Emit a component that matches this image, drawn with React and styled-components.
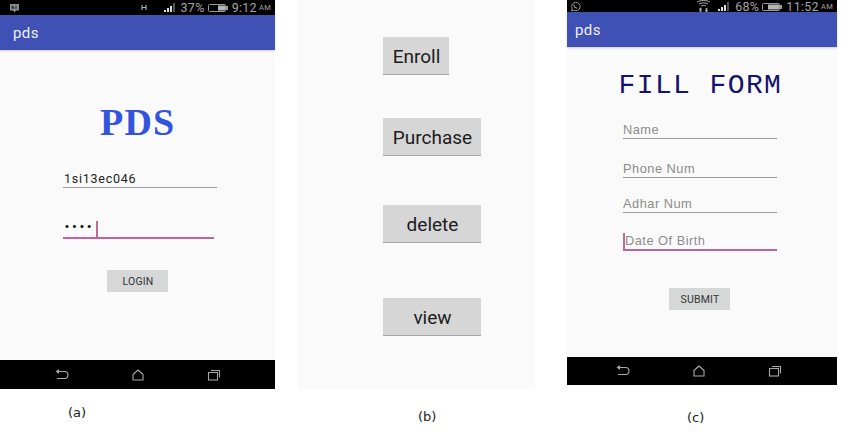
import React from "react";
import styled, { createGlobalStyle } from "styled-components";

const Global = createGlobalStyle`
  html, body { margin: 0; padding: 0; background: #fff; }
  body { font-family: "Roboto", "Liberation Sans", sans-serif; }
`;
const Page = styled.div`
  width: 850px; height: 432px; overflow: hidden; display: flex; align-items: flex-start; background: #fff;
`;
const Figure = styled.div`
  width: ${p => p.$w}px; margin-right: ${p => p.$mr || 0}px; flex: none;
`;
const Caption = styled.div`
  font-family: "DejaVu Sans", sans-serif; font-size: 13px; line-height: 16px; color: #222;
  margin-top: ${p => p.$top}px; margin-left: ${p => p.$left}px;
`;
const Phone = styled.div`
  height: ${p => p.$h}px; display: flex; flex-direction: column; background: #fafafa;
`;
const StatusBar = styled.div`
  height: ${p => p.$h}px; flex: none; background: #000; color: #a4a4a4; display: flex; align-items: center;
  padding: 0 4px 0 ${p => p.$pl}px; font-size: 12.5px; letter-spacing: .3px; font-family: "Roboto", sans-serif;
`;
const Spacer = styled.div` flex: 1; `;
const Small = styled.span` font-size: 7.5px; margin-left: 2px; `;
const Pct = styled.span` margin: 0 3px 0 4px; `;
const Clock = styled.span` margin-left: 4px; `;
const Gap = styled.span` width: ${p => p.$w}px; flex: none; `;
const AppBar = styled.div`
  height: 35px; flex: none; background: #3f51b5; color: #eef0f8; display: flex; align-items: center;
  padding-left: ${p => p.$pl}px; font-size: 15px; letter-spacing: .4px;
  box-shadow: 0 1px 2px rgba(0,0,0,.18);
`;
const Content = styled.div`
  flex: 1; display: flex; flex-direction: column; padding-top: ${p => p.$pt}px; padding-left: ${p => p.$pl}px;
`;
const NavBar = styled.div`
  height: ${p => p.$h}px; flex: none; background: #000; display: flex; align-items: center; justify-content: center;
  gap: 62px; padding-right: ${p => p.$pr || 0}px; color: #a8a8a8;
`;
const BrandTitle = styled.div`
  font-family: "Liberation Serif", serif; font-weight: 700; font-size: 38px; line-height: 40px; color: #3355dd;
  letter-spacing: 1.2px; margin-left: 37px;
`;
const FormTitle = styled.div`
  font-family: "Liberation Mono", monospace; font-size: 28px; line-height: 32px; color: #14146e; letter-spacing: 1.4px;
  margin-left: -4.500px;
`;
const Field = styled.div`
  width: ${p => p.$w}px; height: ${p => p.$h}px; margin-top: ${p => p.$mt}px; box-sizing: border-box;
  border-bottom: ${p => p.$active ? "2px solid #bd6498" : "1px solid #9a9a9a"};
  display: flex; align-items: flex-end; padding: 0 0 1px ${p => p.$pl || 0}px;
  font-family: "Liberation Sans", sans-serif; font-size: 12.8px; line-height: 14px;
`;
const Value = styled.span` color: #222; letter-spacing: .75px; font-family: "Roboto", sans-serif; font-size: 12.5px; `;
const Hint = styled.span` color: #8c8c8c; letter-spacing: .5px; `;
const Dots = styled.span`
  color: #000; font-size: 11px; letter-spacing: 3.600px; line-height: 14px; margin: 0 1px 3px 1px;
  font-family: "Liberation Sans", sans-serif;
`;
const Caret = styled.span`
  display: inline-block; width: 2px; height: 16px; margin-bottom: -1px; background: #c06a9c; flex: none;
`;
const SmallButton = styled.div`
  width: 61px; height: 22px; margin-top: ${p => p.$mt}px; margin-left: ${p => p.$ml}px;
  background: #d6d7d7; color: #333; display: flex; align-items: center; justify-content: center;
  font-family: "Roboto", sans-serif; font-size: 10.500px; letter-spacing: .2px; padding-left: 1px; box-sizing: border-box;
`;
const Menu = styled.div`
  height: 389px; background: #fafafa; display: flex; flex-direction: column; align-items: flex-start; padding-left: 85px;
  box-sizing: border-box;
`;
const BigButton = styled.div`
  width: ${p => p.$w}px; height: 38px; margin-top: ${p => p.$mt}px; box-sizing: border-box;
  background: #d6d6d6; border-bottom: 1.500px solid #a5a5a5; color: #1c1c1c; padding: 2px 0 0 1px;
  display: flex; align-items: center; justify-content: center;
  font-family: "Roboto", sans-serif; font-size: 19px;
`;

const Signal = () => (
  <svg width="13" height="9" viewBox="0 0 13 9" fill="currentColor">
    <rect x="0" y="7" width="2" height="2" fill="#ddd"/><rect x="3" y="5" width="2" height="4" fill="#ddd"/>
    <rect x="6" y="3" width="2" height="6" fill="#ddd"/><rect x="9" y="0" width="2" height="9" opacity=".5"/>
  </svg>
);
const Battery = ({ level }) => (
  <svg width="20" height="9" viewBox="0 0 20 9">
    <rect x=".5" y="1.500" width="17" height="7" rx="1" fill="none" stroke="#9a9a9a"/>
    <rect x="18" y="3" width="2" height="4" fill="#9a9a9a"/>
    <rect x={17 - level} y="2.500" width={level} height="5" fill="#b5b5b5"/>
  </svg>
);
const Chat = () => (
  <svg width="11" height="10" viewBox="0 0 11 10">
    <path d="M1 1h9v6.500H7L5.500 9.500 4 7.500H1z" fill="#8b8b8b"/>
    <path d="M3.200 2.500v3.400M3.200 4h1.600v1.900M7 2.500v3.400" stroke="#111" strokeWidth=".8" fill="none"/>
  </svg>
);
const WhatsApp = () => (
  <svg width="11" height="11" viewBox="0 0 11 11" fill="none" stroke="#9a9a9a">
    <path d="M1.500 9.800l.7-2.300A4.200 4.200 0 1 1 3.700 9.100z"/>
    <path d="M3.900 3.600c0 1.800 1.600 3.500 3.400 3.700" strokeWidth="1.100"/>
  </svg>
);
const Hplus = () => (
  <svg width="7" height="7" viewBox="0 0 7 7" stroke="#b5b5b5" strokeWidth="1.100" fill="none">
    <path d="M1 1v5M5 1v5M1 3.500h4"/>
  </svg>
);
const WifiTransfer = () => (
  <svg width="15" height="12" viewBox="0 0 15 12" fill="none" stroke="#b0b0b0" strokeWidth="1">
    <path d="M1 2c3.500-2 9.500-2 13 0M3 4c2.500-1.500 6.500-1.500 9 0M5 6c1.500-.8 3.500-.8 5 0"/>
    <path d="M4.500 8v4M10.500 8v4" strokeWidth="1.600"/><path d="M3 9.500l1.500-2 1.500 2M9 10l1.500 2 1.500-2" fill="#b0b0b0" stroke="none"/>
  </svg>
);
const Back = () => (
  <svg width="14" height="12" viewBox="0 0 14 12" fill="none" stroke="currentColor" strokeWidth="1.100">
    <path d="M2 2.500h7.500a3.500 3.500 0 0 1 0 7H2"/><path d="M4 .8L1.500 2.500 4 4.200" fill="currentColor"/>
  </svg>
);
const Home = () => (
  <svg width="14" height="12" viewBox="0 0 14 12" fill="none" stroke="currentColor" strokeWidth="1.100">
    <path d="M2 5.500L7 1l5 4.500V11H2z" strokeLinejoin="round"/>
  </svg>
);
const Recent = () => (
  <svg width="14" height="12" viewBox="0 0 14 12" fill="none" stroke="currentColor" strokeWidth="1.100">
    <rect x="1.500" y="3.500" width="9" height="7.500"/><path d="M4 1.500h8.500v7"/>
  </svg>
);
const Nav = ({ h, pr }) => (
  <NavBar $h={h} $pr={pr}><Back /><Home /><Recent /></NavBar>
);

export default function App() {
  return (
    <Page>
      <Global />
      <Figure $w={275} $mr={23}>
        <Phone $h={389}>
          <StatusBar $h={15} $pl={9}>
            <Chat /><Spacer /><Hplus /><Gap $w={16} /><Signal />
            <Pct>37%</Pct><Battery level={7} /><Clock>9:12</Clock><Small>AM</Small>
          </StatusBar>
          <AppBar $pl={13}>pds</AppBar>
          <Content $pt={52} $pl={63}>
            <BrandTitle>PDS</BrandTitle>
            <Field $w={154} $h={21} $mt={25} $pl={1}><Value>1si13ec046</Value></Field>
            <Field $w={151} $h={24} $mt={27} $active $pl={1}><Dots>••••</Dots><Caret /></Field>
            <SmallButton $mt={31} $ml={44}>LOGIN</SmallButton>
          </Content>
          <Nav h={29} />
        </Phone>
        <Caption $top={16} $left={68}>(a)</Caption>
      </Figure>
      <Figure $w={237} $mr={32}>
        <Menu>
          <BigButton $w={66} $mt={37}>Enroll</BigButton>
          <BigButton $w={98} $mt={43}>Purchase</BigButton>
          <BigButton $w={98} $mt={49}>delete</BigButton>
          <BigButton $w={98} $mt={55}>view</BigButton>
        </Menu>
        <Caption $top={20} $left={120}>(b)</Caption>
      </Figure>
      <Figure $w={270}>
        <Phone $h={385}>
          <StatusBar $h={12} $pl={3}>
            <WhatsApp /><Spacer /><WifiTransfer /><Gap $w={7} /><Signal />
            <Pct>68%</Pct><Battery level={11} /><Clock>11:52</Clock><Small>AM</Small>
          </StatusBar>
          <AppBar $pl={8}>pds</AppBar>
          <Content $pt={23} $pl={56}>
            <FormTitle>FILL FORM</FormTitle>
            <Field $w={154} $h={20} $mt={17}><Hint>Name</Hint></Field>
            <Field $w={154} $h={20} $mt={19}><Hint>Phone Num</Hint></Field>
            <Field $w={154} $h={20} $mt={15}><Hint>Adhar Num</Hint></Field>
            <Field $w={154} $h={20} $mt={18} $active><Caret /><Hint>Date Of Birth</Hint></Field>
            <SmallButton $mt={37} $ml={46}>SUBMIT</SmallButton>
          </Content>
          <Nav h={28} pr={6} />
        </Phone>
        <Caption $top={25} $left={120}>(c)</Caption>
      </Figure>
    </Page>
  );
}
